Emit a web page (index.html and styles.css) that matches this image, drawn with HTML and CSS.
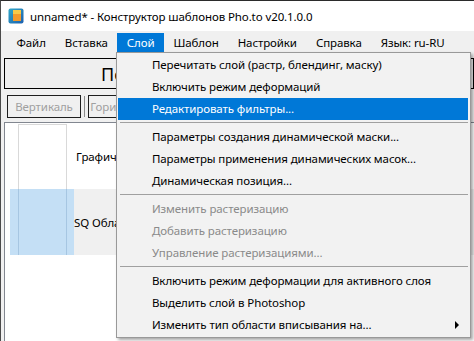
FILE: index.html
```html
<!DOCTYPE html>
<html lang="ru">
<head>
    <meta charset="UTF-8">
    <title>unnamed* - Конструктор шаблонов Pho.to v20.1.0.0</title>
    <link rel="stylesheet" href="styles.css">
</head>
<body>
    <div class="window">
        <div class="titlebar">
            <svg class="app-icon" width="16" height="16" viewBox="0 0 16 16">
                <defs>
                    <linearGradient id="bg" x1="0" y1="0" x2="1" y2="1">
                        <stop offset="0" stop-color="#2fa8c8"/>
                        <stop offset="1" stop-color="#1d5fae"/>
                    </linearGradient>
                </defs>
                <rect x="0.5" y="0.5" width="15" height="15" rx="2" fill="url(#bg)"/>
                <rect x="5" y="2" width="8" height="11" fill="#f39a2b"/>
                <rect x="5" y="2" width="8" height="4" fill="#f7c948"/>
            </svg>
            <span>unnamed* - Конструктор шаблонов Pho.to v20.1.0.0</span>
        </div>

        <div class="menubar">
            <span class="menu-item">Файл</span>
            <span class="menu-item">Вставка</span>
            <span class="menu-item open">Слой</span>
            <span class="menu-item">Шаблон</span>
            <span class="menu-item">Настройки</span>
            <span class="menu-item">Справка</span>
            <span class="menu-item">Язык: ru-RU</span>
        </div>

        <div class="content">
            <button class="big-btn">Перечитать все слои из PSD</button>
            <div class="tool-row">
                <button class="tool-btn" disabled>Вертикаль</button>
                <span class="tool-sep"></span>
                <button class="tool-btn" disabled>Горизонталь</button>
            </div>
            <div class="layer-list">
                <div class="layer-row first">
                    <div class="thumb-cell"><div class="thumb"></div></div>
                    <div class="name-cell">Графический слой</div>
                </div>
                <div class="layer-row selected">
                    <div class="thumb-cell"><div class="thumb"></div></div>
                    <div class="name-cell">SQ Область вписывания</div>
                </div>
            </div>
        </div>

        <!-- выпадающее меню "Слой" -->
        <div class="dropdown">
            <div class="drop-item">Перечитать слой (растр, блендинг, маску)</div>
            <div class="drop-item">Включить режим деформаций</div>
            <div class="drop-item active">Редактировать фильтры...</div>
            <div class="drop-sep"></div>
            <div class="drop-item">Параметры создания динамической маски...</div>
            <div class="drop-item">Параметры применения динамических масок...</div>
            <div class="drop-item">Динамическая позиция...</div>
            <div class="drop-sep"></div>
            <div class="drop-item disabled">Изменить растеризацию</div>
            <div class="drop-item disabled">Добавить растеризацию</div>
            <div class="drop-item disabled">Управление растеризациями...</div>
            <div class="drop-sep"></div>
            <div class="drop-item">Включить режим деформации для активного слоя</div>
            <div class="drop-item">Выделить слой в Photoshop</div>
            <div class="drop-item submenu">Изменить тип области вписывания на...</div>
        </div>
    </div>
</body>
</html>
```

FILE: styles.css
```css
/* базовые стили */
* {
    box-sizing: border-box;
    margin: 0;
    padding: 0;
}
body {
    width: 474px;
    height: 341px;
    overflow: hidden;
    font-family: "Noto Sans", "Open Sans", sans-serif;
    font-size: 11.5px;
    letter-spacing: -0.1px;
    color: #000;
    background: #f0f0f0;
}
/* окно */
.window {
    position: relative;
    height: 341px;
    overflow: hidden;
    border-top: 1px solid #2b2b2b;
    border-left: 1px solid #4a4a4a;
    background: #f0f0f0;
}
.titlebar {
    height: 30px;
    background: #fff;
    display: flex;
    align-items: center;
    gap: 6px;
    padding-left: 7px;
    white-space: nowrap;
}
.app-icon {
    flex: none;
}
/* главное меню */
.menubar {
    display: flex;
    height: 22px;
    padding: 2px 0 1px 6px;
    background: #f0f0f0;
    white-space: nowrap;
}
.menu-item {
    padding: 0 9.5px;
    line-height: 19px;
}
.menu-item.open {
    background: #0078d7;
    color: #fff;
}
/* содержимое формы */
.content {
    padding: 5px 0 0 3px;
}
.big-btn {
    display: block;
    width: 100%;
    height: 31px;
    padding-left: 96px;
    border: 1px solid #000;
    background: #efefef;
    font-family: inherit;
    font-size: 18px;
    text-align: left;
    white-space: nowrap;
    overflow: hidden;
}
.tool-row {
    display: flex;
    align-items: center;
    gap: 3px;
    margin-top: 6px;
    padding-left: 3px;
}
.tool-btn {
    width: 74px;
    height: 23px;
    border: 1px solid #1e1e1e;
    background: #f0f0f0;
    color: #a0a0a0;
    font-family: inherit;
    font-size: 11.5px;
    letter-spacing: -0.1px;
    white-space: nowrap;
    overflow: hidden;
}
.tool-sep {
    width: 1px;
    height: 21px;
    background: #8c8c8c;
}
/* список слоёв */
.layer-list {
    margin-top: 4px;
    height: 230px;
    padding-left: 5px;
    border-left: 1px solid #828790;
    border-top: 1px solid #828790;
    background: #fff;
}
.layer-row {
    display: flex;
    height: 66px;
}
.thumb-cell {
    width: 64px;
    padding: 0 7px 0 8px;
}
.thumb {
    width: 49px;
    height: 100%;
    border-left: 1px solid #d9d9d9;
    border-right: 1px solid #d9d9d9;
}
.layer-row.first .thumb {
    margin-top: 1px;
    border-top: 1px solid #d9d9d9;
}
.name-cell {
    flex: 1;
    padding-left: 2px;
    display: flex;
    align-items: center;
    white-space: nowrap;
    overflow: hidden;
}
.layer-row.selected .thumb-cell {
    background: #c4dff5;
}
.layer-row.selected .thumb {
    border-color: #a6c6e2;
}
.layer-row.selected .name-cell {
    background: #f0f0f0;
    padding-left: 0;
}
/* выпадающее меню */
.dropdown {
    position: absolute;
    left: 115px;
    top: 51px;
    width: 355px;
    padding: 1px 2px 1px 1px;
    border: 1px solid #999;
    background: #f2f2f2;
    box-shadow: 2px 2px 3px rgba(0,0,0,0.35);
    white-space: nowrap;
}
.drop-item {
    position: relative;
    height: 22px;
    line-height: 22px;
    padding-left: 34px;
}
.drop-item.active {
    background: #0078d7;
    color: #fff;
}
.drop-item.disabled {
    color: #8a8a8a;
}
.drop-item.submenu::after {
    content: "";
    position: absolute;
    right: 9px;
    top: 7px;
    border-left: 4px solid #000;
    border-top: 4px solid transparent;
    border-bottom: 4px solid transparent;
}
.drop-sep {
    height: 6px;
    padding-top: 2px;
    margin-left: 2px;
}
.drop-sep::before {
    content: "";
    display: block;
    height: 1px;
    background: #a0a0a0;
}
```
